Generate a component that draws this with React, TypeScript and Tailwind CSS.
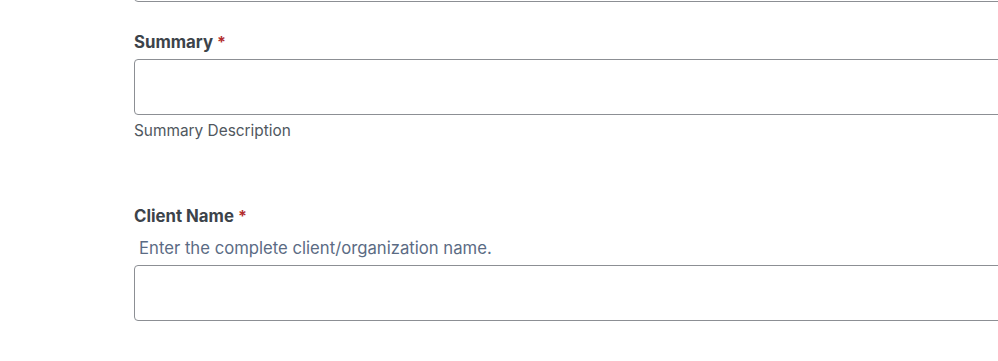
import type { FC } from "react";

type FieldProps = {
  label: string;
  help?: string;
  description?: string;
};

const Field: FC<FieldProps> = ({ label, help, description }) => {
  return (
    <div>
      <label className="block text-[16.8px] font-bold leading-[20px] text-[#3c434a]">
        {label}
        <span className="ml-[4px] text-[16px] text-[#b32d2e]">*</span>
      </label>
      {help && (
        <p className="mt-[12px] pl-[5px] text-[16.7px] leading-[20px] text-[#5b6b84]">{help}</p>
      )}
      <input
        type="text"
        className="mt-[7px] block h-[56px] w-[1000px] rounded-[4px] border border-[#8c8f94] bg-white"
      />
      {description && (
        <p className="mt-[7px] text-[15.4px] leading-[18px] text-[#50575e]">{description}</p>
      )}
    </div>
  );
};

export default function App() {
  return (
    <div
      className="h-[361px] w-[998px] overflow-hidden bg-white pl-[134px]"
      style={{ fontFamily: "Inter, 'Liberation Sans', sans-serif" }}>
      <input
        type="text"
        className="-mt-[54px] block h-[56px] w-[1000px] rounded-[4px] border border-[#8c8f94] bg-white"
      />
      <div className="mt-[30px]">
        <Field label="Summary" description="Summary Description" />
      </div>
      <div className="mt-[66px]">
        <Field label="Client Name" help="Enter the complete client/organization name." />
      </div>
    </div>
  );
}
